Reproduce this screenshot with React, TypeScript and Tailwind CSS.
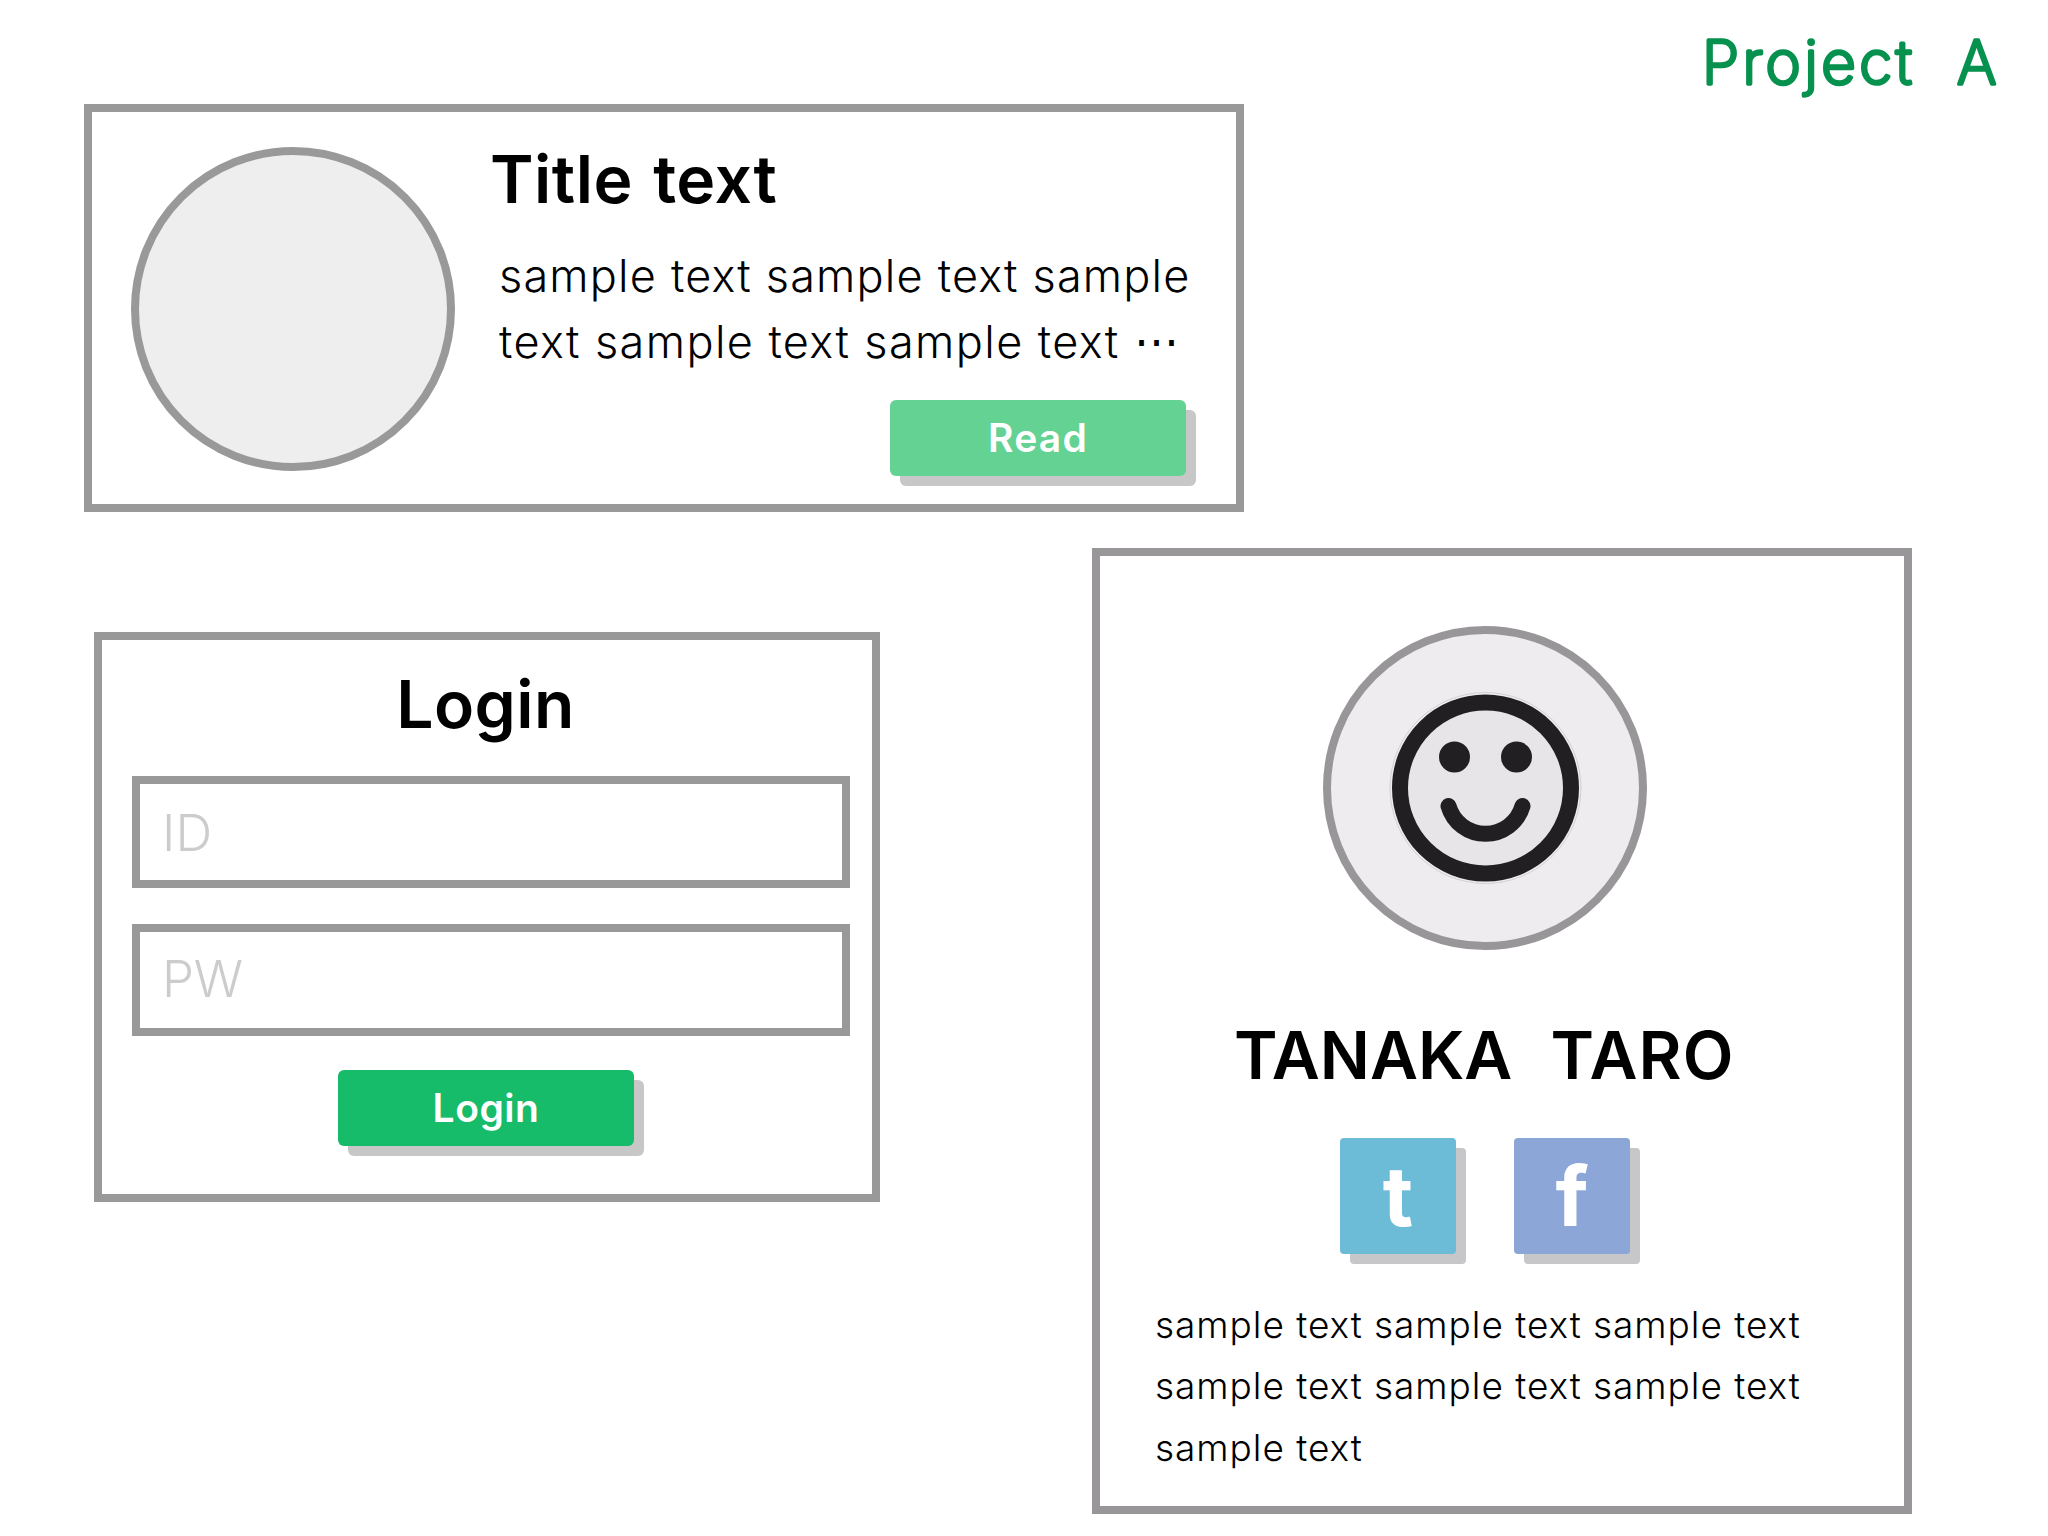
import type { ReactNode } from "react";

interface ActionButtonProps {
  className: string;
  children: ReactNode;
}

function ActionButton({ className, children }: ActionButtonProps) {
  return (
    <button type="button" className={`h-[76px] w-[296px] rounded-md text-[39px] font-semibold text-white shadow-[10px_10px_0_#c7c7c7] ${className}`}>
      {children}
    </button>
  );
}

function Smile() {
  return (
    <svg width="200" height="200" viewBox="0 0 200 200" fill="none" stroke="#211f22" strokeWidth="16" strokeLinecap="round">
      <circle cx="100.5" cy="100" r="95.5" stroke="#d2d0d3" strokeWidth="1" />
      <circle cx="100.5" cy="100" r="85.5" fill="#e7e5e8" />
      <circle cx="69.5" cy="69" r="15.5" fill="#211f22" stroke="none" />
      <circle cx="131.5" cy="69" r="15.5" fill="#211f22" stroke="none" />
      <path d="M63.5 118 A38.5 38.5 0 0 0 137.5 118" />
    </svg>
  );
}

function ArticleCard() {
  return (
    <section className="ml-[84px] flex h-[408px] w-[1160px] shrink-0 border-8 border-[#999] pt-[35px] pl-[39px]">
      <div className="size-[324px] rounded-full border-8 border-[#999] bg-[#eee]" />
      <div className="ml-[35px] flex grow flex-col">
        <h2 className="text-[66px] leading-[64px] font-semibold tracking-[0.5px] [word-spacing:3px]">Title text</h2>
        <p className="mt-[32px] ml-[9px] text-[45px] leading-[66px] font-light tracking-[1.2px] whitespace-nowrap">
          sample text sample text sample
          <br />
          <span className="tracking-[1.42px]">text sample text sample text </span>
          <span className="align-[2px] font-['DejaVu_Sans',sans-serif] leading-none tracking-normal">⋯</span>
        </p>
        <ActionButton className="mt-[25px] mr-[50px] self-end bg-[#63d292] tracking-[1.2px]">Read</ActionButton>
      </div>
    </section>
  );
}

function LoginForm() {
  return (
    <form className="mt-[120px] ml-[94px] flex h-[570px] w-[786px] flex-col items-center border-8 border-[#999]">
      <h2 className="mt-[32px] mr-[3px] text-[66px] leading-[64px] font-semibold tracking-[0.4px]">Login</h2>
      <input
        type="text"
        placeholder="ID"
        className="mt-[40px] ml-2 h-[112px] w-[718px] border-8 border-[#999] px-[22px] text-[51px] font-light tracking-[0.2px] placeholder:text-[#ccc]"
      />
      <input
        type="password"
        placeholder="PW"
        className="mt-[36px] ml-2 h-[112px] w-[718px] border-8 border-[#999] px-[22px] pb-[3px] text-[51px] font-light tracking-[-0.3px] placeholder:text-[#ccc]"
      />
      <ActionButton className="mt-[34px] mr-[2px] bg-[#17bc6a] tracking-[0.5px]">Login</ActionButton>
    </form>
  );
}

function ProfileCard() {
  return (
    <section className="mt-[36px] ml-[212px] flex h-[966px] w-[820px] flex-col border-8 border-[#999699] pt-[70px]">
      <div className="ml-[223px] flex size-[324px] shrink-0 items-center justify-center rounded-full border-8 border-[#999699] bg-[#efecf0]">
        <Smile />
      </div>
      <h2 className="mt-[73px] ml-[134px] flex text-[66px] leading-[64px] font-semibold">
        <span>TANAKA</span>
        <span className="ml-[38px] tracking-[1.2px]">TARO</span>
      </h2>
      <div className="mt-[51px] ml-[240px] flex gap-[58px] text-[83px] leading-none font-bold text-white">
        <button type="button" className="size-[116px] rounded bg-[#6cbcd7] shadow-[10px_10px_0_#c7c6c8]">
          t
        </button>
        <button type="button" className="size-[116px] rounded bg-[#8ba6d7] shadow-[10px_10px_0_#c7c6c8]">
          f
        </button>
      </div>
      <p className="mt-[40px] ml-[55px] text-[37px] leading-[61.25px] font-light tracking-[0.96px] whitespace-nowrap">
        sample text sample text sample text
        <br />
        sample text sample text sample text
        <br />
        sample text
      </p>
    </section>
  );
}

export default function App() {
  return (
    <div className="flex h-[1536px] w-[2048px] flex-col overflow-hidden bg-white font-['Inter','Noto_Sans_CJK_JP',sans-serif] text-black">
      <header className="flex h-[104px] shrink-0 justify-end pr-[40px]">
        {/* the outline rounds off the letter ends */}
        <svg width="320" height="104" fill="#07914f" stroke="#07914f" strokeWidth="3.6" strokeLinejoin="round" className="text-[60px] font-extralight">
          <text x="14" y="83.5" className="tracking-[3.5px]">
            Project
          </text>
          <text x="269" y="83.5">
            A
          </text>
        </svg>
      </header>

      <ArticleCard />

      <div className="flex items-start">
        <LoginForm />
        <ProfileCard />
      </div>
    </div>
  );
}
